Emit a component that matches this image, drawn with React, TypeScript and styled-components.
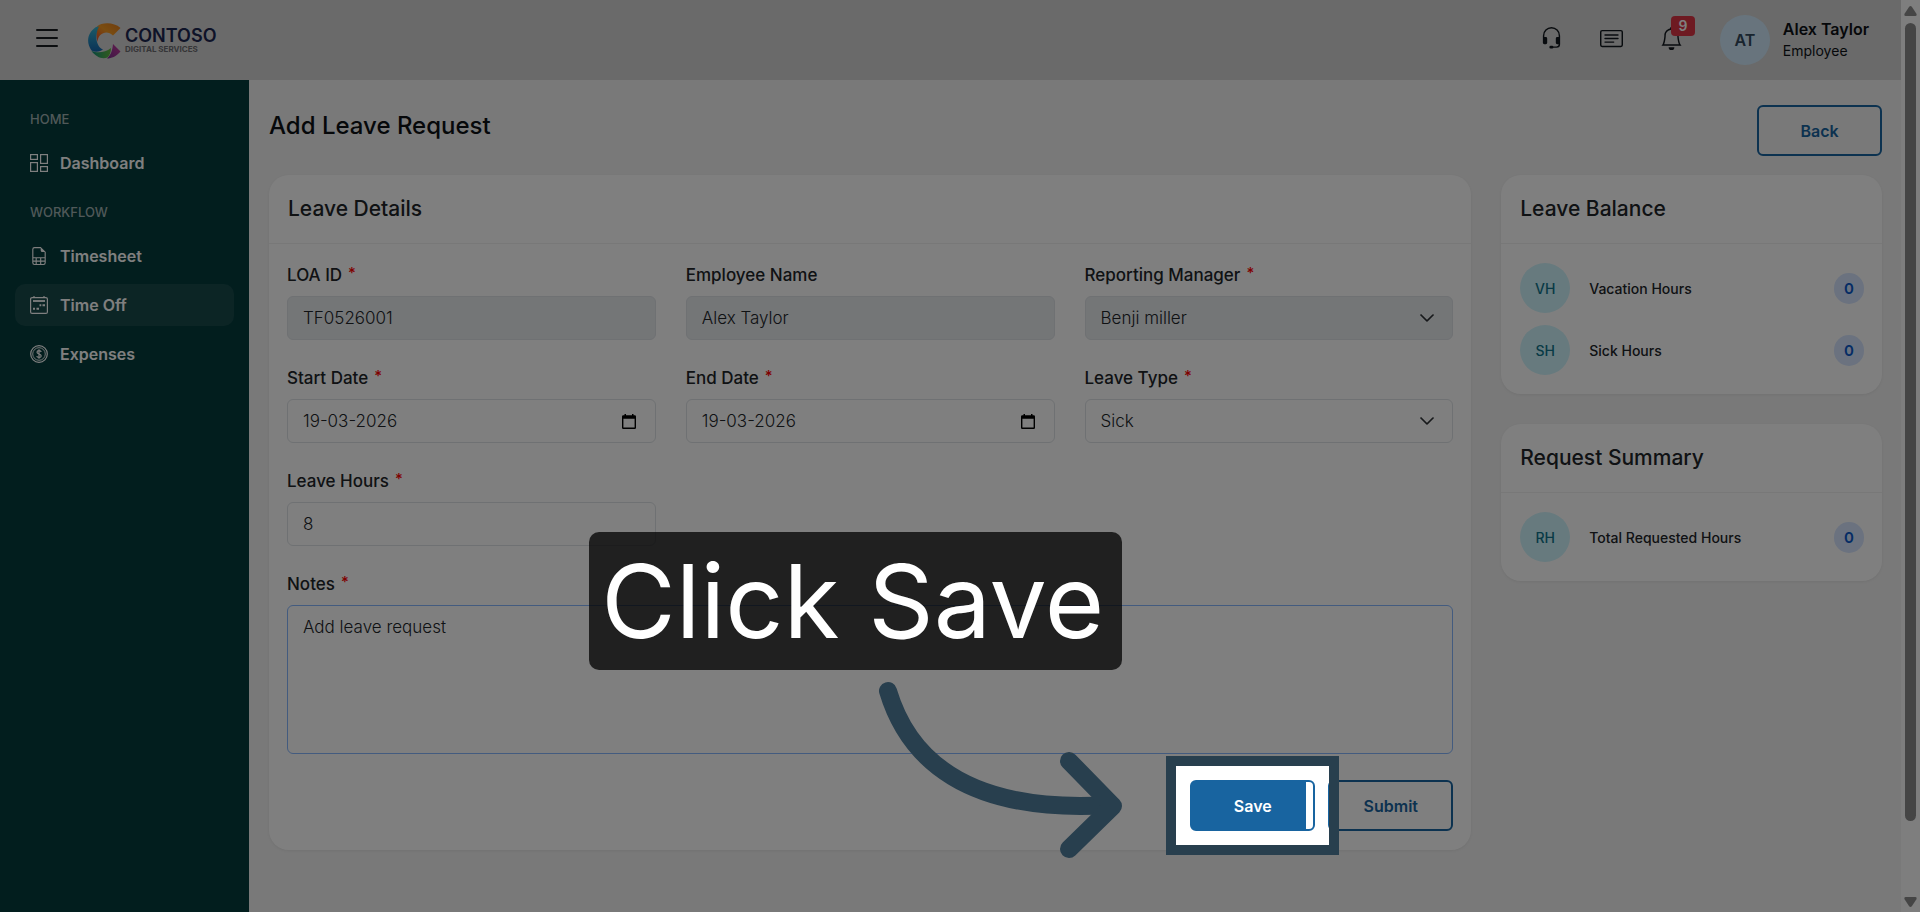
import React from 'react';
import styled, { createGlobalStyle } from 'styled-components';
import { BsBell, BsCardText, BsChevronDown, BsFileEarmarkSpreadsheet, BsHeadset } from 'react-icons/bs';

const color = {
  ink: '#212529',
  heading: '#0c1014',
  page: '#f2f2f2',
  header: '#d4d4d4',
  sidebar: '#043c3c',
  sidebarActive: '#184a4b',
  primary: '#1864a0',
  border: '#dee2e6',
  disabled: '#e9ecef',
  tour: '#283f4e',
};

const GlobalStyle = createGlobalStyle`
  *, *::before, *::after { box-sizing: border-box; }
  body {
    margin: 0;
    background: ${color.page};
    color: ${color.ink};
    font-family: Inter, 'Liberation Sans', sans-serif;
    font-size: 16px;
  }
  h1, h2, p, ul { margin: 0; padding: 0; }
  ul { list-style: none; }
  button, input, select, textarea { font-family: inherit; }
`;

const Shell = styled.div`
  display: flex;
  min-height: 100vh;
`;

const Page = styled.div`
  flex: 1;
  min-width: 0;
  display: flex;
  flex-direction: column;
`;

/* Header */

const Header = styled.header`
  display: flex;
  align-items: center;
  height: 80px;
  padding: 0 32px 0 36px;
  background: ${color.header};
`;

const MenuButton = styled.button`
  display: flex;
  flex-direction: column;
  gap: 6px;
  width: 22px;
  padding: 0;
  margin-bottom: 5px;
  border: 0;
  background: none;

  span {
    height: 2px;
    border-radius: 1px;
    background: #191c20;
  }
`;

const Brand = styled.a`
  display: flex;
  align-items: center;
  gap: 4px;
  margin: 0 auto 0 30px;
  text-decoration: none;
`;

const BrandText = styled.span`
  display: flex;
  flex-direction: column;
`;

const BrandName = styled.strong`
  color: #1c2650;
  font-size: 18px;
  font-weight: 600;
  line-height: 18px;
`;

const BrandTagline = styled.span`
  color: #6c6c70;
  font-size: 8px;
  font-weight: 700;
  line-height: 9px;
`;

const HeaderActions = styled.div`
  display: flex;
  gap: 37px;
  margin-right: 37px;
`;

const IconButton = styled.button`
  position: relative;
  display: flex;
  padding: 0 0 4px;
  border: 0;
  background: none;
  color: #10161c;
  font-size: 23px;
`;

const Count = styled.span`
  position: absolute;
  top: -11px;
  left: 11px;
  width: 24px;
  border-radius: 4px;
  background: #dc3545;
  color: #fff;
  font-size: 14px;
  font-weight: 600;
  line-height: 20px;
  text-align: center;
`;

const Avatar = styled.span<{ $user?: boolean }>`
  display: flex;
  align-items: center;
  justify-content: center;
  flex: none;
  width: 50px;
  height: 50px;
  border-radius: 50%;
  background: ${(p) => (p.$user ? '#d0e9fa' : '#cff4fc')};
  color: ${(p) => (p.$user ? '#32485c' : '#10748c')};
  font-size: ${(p) => (p.$user ? 16 : 14)}px;
  font-weight: ${(p) => (p.$user ? 600 : 500)};
`;

const Account = styled.div`
  display: flex;
  align-items: center;
  gap: 13px;
`;

const AccountName = styled.p`
  color: ${color.heading};
  font-size: 16px;
  font-weight: 600;
  line-height: 22px;
`;

const AccountRole = styled.p`
  color: ${color.heading};
  font-size: 14px;
  line-height: 22px;
`;

/* Sidebar */

const Body = styled.div`
  flex: 1;
  display: flex;
`;

const Sidebar = styled.nav`
  flex: none;
  width: 249px;
  padding: 29px 15px;
  background: ${color.sidebar};
`;

const NavHeading = styled.p`
  padding-left: 15px;
  margin-bottom: 13px;
  color: #a0b2b2;
  font-size: 13px;
  font-weight: 500;
  line-height: 20px;
`;

const NavList = styled.ul`
  display: flex;
  flex-direction: column;
  gap: 7px;
  margin-bottom: 18px;
`;

const NavLink = styled.a<{ $active?: boolean }>`
  display: flex;
  align-items: center;
  gap: 12px;
  height: 42px;
  padding: 0 15px;
  border-radius: 10px;
  background: ${(p) => (p.$active ? color.sidebarActive : 'transparent')};
  color: #fff;
  font-size: 16px;
  font-weight: 600;
  text-decoration: none;

  svg { flex: none; }
`;

/* Main content */

const Main = styled.main`
  flex: 1;
  min-width: 0;
  padding: 25px 19px 25px 20px;
`;

const TitleRow = styled.div`
  display: flex;
  justify-content: space-between;
  margin-bottom: 19px;
`;

const Title = styled.h1`
  color: ${color.heading};
  font-size: 24px;
  font-weight: 500;
  line-height: 41px;
`;

const Button = styled.button<{ $loading?: boolean }>`
  width: 125px;
  height: 51px;
  border: 2px solid ${color.primary};
  border-radius: 6px;
  background: ${(p) =>
    p.$loading ? `linear-gradient(90deg, ${color.primary} 114px, #fff 114px)` : 'transparent'};
  color: ${(p) => (p.$loading ? '#fff' : color.primary)};
  font-size: 16px;
  font-weight: 600;
`;

const Columns = styled.div`
  display: grid;
  grid-template-columns: repeat(12, minmax(0, 1fr));
  align-items: start;
  gap: 30px;
`;

const Aside = styled.aside`
  grid-column: span 3;
  display: flex;
  flex-direction: column;
  gap: 30px;
`;

const Card = styled.section`
  border-radius: 20px;
  background: #fff;
  box-shadow: 0 1px 3px rgba(0, 0, 0, 0.06);
`;

const FormCard = styled(Card)`
  grid-column: span 9;
`;

const CardTitle = styled.h2`
  padding: 0 19px;
  border-bottom: 1px solid #f0f0f0;
  font-size: 21px;
  font-weight: 500;
  line-height: 68px;
`;

const Form = styled.form`
  display: grid;
  grid-template-columns: repeat(3, minmax(0, 1fr));
  gap: 26px 30px;
  padding: 19px 18px;
`;

const Field = styled.div<{ $wide?: boolean }>`
  display: flex;
  flex-direction: column;
  gap: 9px;
  grid-column: ${(p) => (p.$wide ? '1 / -1' : 'auto')};
`;

const Label = styled.label`
  font-size: 17px;
  font-weight: 500;
  line-height: 24px;
`;

const Required = styled.span`
  margin-left: 6px;
  color: #f00;
  font-size: 15px;
  line-height: 0;
  vertical-align: 3px;
`;

const controlStyle = `
  display: block;
  width: 100%;
  height: 44px;
  padding: 0 15px;
  border: 1px solid ${color.border};
  border-radius: 6px;
  outline: 0;
  background: #fff;
  color: ${color.ink};
  font-size: 17px;
  font-weight: 300;
  opacity: 1;

  &:disabled { background: ${color.disabled}; }
`;

const Input = styled.input`${controlStyle}`;

const Select = styled.select`
  ${controlStyle}
  appearance: none;
`;

const NotesBox = styled.textarea`
  ${controlStyle}
  height: 149px;
  padding: 9px 15px;
  border-color: #86b7fe;
  line-height: 24px;
  resize: none;
`;

const ControlWrap = styled.div`
  position: relative;
`;

const ControlIcon = styled.span`
  position: absolute;
  top: 0;
  right: 18px;
  height: 44px;
  display: flex;
  align-items: center;
  pointer-events: none;

  svg {
    stroke: currentColor;
    stroke-width: 0.7;
  }
`;

const PickerButton = styled.button`
  position: absolute;
  top: 0;
  right: 12px;
  height: 44px;
  padding: 0 8px;
  display: flex;
  align-items: center;
  border: 0;
  background: none;
  color: #000;
`;

const FormActions = styled.div`
  grid-column: 1 / -1;
  display: flex;
  justify-content: flex-end;
  gap: 13px;
`;

/* Side cards */

const BalanceList = styled.ul`
  display: flex;
  flex-direction: column;
  gap: 12px;
  padding: 19px 18px 19px 19px;
`;

const BalanceRow = styled.li`
  display: flex;
  align-items: center;
  gap: 19px;
  font-size: 14px;
  font-weight: 500;
`;

const BalanceValue = styled.span`
  width: 30px;
  margin-left: auto;
  border-radius: 15px;
  background: #d6e5ff;
  color: #0a58ca;
  font-size: 15px;
  font-weight: 600;
  line-height: 31px;
  text-align: center;
`;

/* Guided tour layer, anchored to the button it explains */

const TourAnchor = styled.div`
  position: relative;
`;

const Spotlight = styled.div`
  position: absolute;
  inset: -24px;
  z-index: 10;
  border: 10px solid ${color.tour};
  box-shadow: 0 0 0 3000px rgba(0, 0, 0, 0.5);
  pointer-events: none;
`;

const Callout = styled.div`
  position: absolute;
  right: calc(100% + 68px);
  bottom: calc(100% + 110px);
  z-index: 11;
  padding: 0 18px 0 12px;
  border-radius: 10px;
  background: rgba(0, 0, 0, 0.75);
  color: #fff;
  font-size: 102px;
  line-height: 138px;
  white-space: nowrap;
`;

const TourArrow = styled.svg`
  position: absolute;
  top: -102px;
  right: calc(100% + 64px);
  z-index: 11;
  width: 250px;
  height: 184px;
`;

/* Scrollbar */

const Scrollbar = styled.div`
  position: sticky;
  top: 0;
  flex: none;
  display: flex;
  flex-direction: column;
  align-items: center;
  gap: 7px;
  width: 19px;
  height: 100vh;
  padding: 6px 0 5px;
  background: #fcfcfc;
  color: #8b8b8b;
`;

const ScrollTrack = styled.div`
  flex: 1;
`;

const ScrollThumb = styled.div`
  width: 11px;
  height: 92%;
  border-radius: 6px;
  background: currentColor;
`;

const Logo = () => (
  <svg width="33" height="37" viewBox="0 0 33 37" aria-hidden="true">
    <defs>
      <linearGradient id="warm" x1="0" y1="1" x2="1" y2="0">
        <stop offset="0" stopColor="#e8482a" />
        <stop offset="0.5" stopColor="#f59a22" />
        <stop offset="1" stopColor="#e07a1c" />
      </linearGradient>
      <linearGradient id="cool" x1="0" y1="0" x2="0" y2="1">
        <stop offset="0" stopColor="#38b5ce" />
        <stop offset="1" stopColor="#1466ae" />
      </linearGradient>
      <linearGradient id="leaf" x1="0" y1="0" x2="1" y2="0">
        <stop offset="0" stopColor="#128f7c" />
        <stop offset="1" stopColor="#66b83c" />
      </linearGradient>
      <linearGradient id="berry" x1="1" y1="0" x2="0" y2="1">
        <stop offset="0" stopColor="#c63a9a" />
        <stop offset="1" stopColor="#7c2f90" />
      </linearGradient>
    </defs>
    <path d="M9 4.500C14 0 26 0 32.500 6L25 13.500C19 7.500 10 11 9.500 20C8 15 8 9 9 4.500Z" fill="url(#warm)" />
    <path d="M8 5C-1 11 -2 21 3.500 28.500C8 31 13 29 15 27.500C8.500 25 6 14 11 4.500Z" fill="url(#cool)" />
    <path d="M3.500 29C8 35 14 37.500 19.500 35.500C22 33 23 30 23 26C17 31 9 31 3.500 29Z" fill="url(#leaf)" />
    <path d="M25 22L32.500 29.500C28 34.500 23.500 36.500 19 36.500C23 33 24.500 28 25 22Z" fill="url(#berry)" />
  </svg>
);

const DashboardIcon = () => (
  <svg width="18" height="18" viewBox="0 0 18 18" fill="none" stroke="currentColor" strokeWidth="1.2" aria-hidden="true">
    <rect x="0.600" y="0.600" width="6.800" height="4.800" />
    <rect x="0.600" y="8.600" width="6.800" height="8.800" />
    <rect x="10.600" y="0.600" width="6.800" height="8.800" />
    <rect x="10.600" y="12.600" width="6.800" height="4.800" />
  </svg>
);

const TimeOffIcon = () => (
  <svg width="18" height="18" viewBox="0 0 18 18" fill="none" stroke="currentColor" strokeWidth="1.2" aria-hidden="true">
    <rect x="0.600" y="1.600" width="16.800" height="15.800" rx="1.500" />
    <path d="M4 0v2M14 0v2" />
    <path d="M3 5h12" strokeWidth="1.800" />
    <path d="M9.500 9.200h1.800M12.500 9.200h2.500M3 12.800h2M6.500 12.800h2.500" strokeWidth="2" />
  </svg>
);

const ExpensesIcon = () => (
  <svg width="18" height="18" viewBox="0 0 18 18" fill="none" stroke="currentColor" strokeWidth="1.2" aria-hidden="true">
    <circle cx="9" cy="9" r="8.300" />
    <circle cx="9" cy="9" r="6.300" strokeWidth="0.900" />
    <path d="M11.200 7C10.800 5.200 7 5.300 7 7.200C7 9.300 11.200 8.600 11.200 10.900C11.200 12.800 7.100 12.900 6.800 11M9 4.300v9.400" />
  </svg>
);

const CalendarIcon = () => (
  <svg width="14" height="15" viewBox="0 0 14 15" aria-hidden="true">
    <path
      fill="currentColor"
      d="M2.500 0H4V1.300H10V0H11.500V1.300H12.700Q14 1.300 14 2.600V13.700Q14 15 12.700 15H1.300Q0 15 0 13.700V2.600Q0 1.300 1.300 1.300H2.500ZM1.400 4.800V13.600H12.600V4.800Z"
    />
  </svg>
);

type FieldProps = { id: string; label: string; required?: boolean; wide?: boolean; children: React.ReactNode };

const LabeledField = ({ id, label, required, wide, children }: FieldProps) => (
  <Field $wide={wide}>
    <Label htmlFor={id}>
      {label}
      {required && <Required>*</Required>}
    </Label>
    {children}
  </Field>
);

const DateInput = ({ id, value }: { id: string; value: string }) => (
  <ControlWrap>
    <Input id={id} defaultValue={value} />
    <PickerButton type="button" aria-label="Open calendar">
      <CalendarIcon />
    </PickerButton>
  </ControlWrap>
);

const SelectInput = ({ id, value, disabled }: { id: string; value: string; disabled?: boolean }) => (
  <ControlWrap>
    <Select id={id} disabled={disabled} defaultValue={value}>
      <option>{value}</option>
    </Select>
    <ControlIcon>
      <BsChevronDown />
    </ControlIcon>
  </ControlWrap>
);

const SummaryCard = ({ title, rows }: { title: string; rows: [string, string, number][] }) => (
  <Card>
    <CardTitle>{title}</CardTitle>
    <BalanceList>
      {rows.map(([initials, name, hours]) => (
        <BalanceRow key={initials}>
          <Avatar>{initials}</Avatar>
          {name}
          <BalanceValue>{hours}</BalanceValue>
        </BalanceRow>
      ))}
    </BalanceList>
  </Card>
);

export default function App() {
  return (
    <>
      <GlobalStyle />
      <Shell>
        <Page>
          <Header>
            <MenuButton aria-label="Toggle menu">
              <span />
              <span />
              <span />
            </MenuButton>
            <Brand href="#">
              <Logo />
              <BrandText>
                <BrandName>CONTOSO</BrandName>
                <BrandTagline>DIGITAL SERVICES</BrandTagline>
              </BrandText>
            </Brand>
            <HeaderActions>
              <IconButton aria-label="Support">
                <BsHeadset />
              </IconButton>
              <IconButton aria-label="News">
                <BsCardText />
              </IconButton>
              <IconButton aria-label="Notifications">
                <BsBell />
                <Count>9</Count>
              </IconButton>
            </HeaderActions>
            <Account>
              <Avatar $user>AT</Avatar>
              <div>
                <AccountName>Alex Taylor</AccountName>
                <AccountRole>Employee</AccountRole>
              </div>
            </Account>
          </Header>

          <Body>
            <Sidebar>
              <NavHeading>HOME</NavHeading>
              <NavList>
                <li>
                  <NavLink href="#">
                    <DashboardIcon />
                    Dashboard
                  </NavLink>
                </li>
              </NavList>
              <NavHeading>WORKFLOW</NavHeading>
              <NavList>
                <li>
                  <NavLink href="#">
                    <BsFileEarmarkSpreadsheet size={18} />
                    Timesheet
                  </NavLink>
                </li>
                <li>
                  <NavLink href="#" $active>
                    <TimeOffIcon />
                    Time Off
                  </NavLink>
                </li>
                <li>
                  <NavLink href="#">
                    <ExpensesIcon />
                    Expenses
                  </NavLink>
                </li>
              </NavList>
            </Sidebar>

            <Main>
              <TitleRow>
                <Title>Add Leave Request</Title>
                <Button type="button">Back</Button>
              </TitleRow>
              <Columns>
                <FormCard>
                  <CardTitle>Leave Details</CardTitle>
                  <Form>
                    <LabeledField id="loa" label="LOA ID" required>
                      <Input id="loa" defaultValue="TF0526001" disabled />
                    </LabeledField>
                    <LabeledField id="employee" label="Employee Name">
                      <Input id="employee" defaultValue="Alex Taylor" disabled />
                    </LabeledField>
                    <LabeledField id="manager" label="Reporting Manager" required>
                      <SelectInput id="manager" value="Benji miller" disabled />
                    </LabeledField>
                    <LabeledField id="start" label="Start Date" required>
                      <DateInput id="start" value="19-03-2026" />
                    </LabeledField>
                    <LabeledField id="end" label="End Date" required>
                      <DateInput id="end" value="19-03-2026" />
                    </LabeledField>
                    <LabeledField id="type" label="Leave Type" required>
                      <SelectInput id="type" value="Sick" />
                    </LabeledField>
                    <LabeledField id="hours" label="Leave Hours" required>
                      <Input id="hours" defaultValue="8" />
                    </LabeledField>
                    <LabeledField id="notes" label="Notes" required wide>
                      <NotesBox id="notes" defaultValue="Add leave request" />
                    </LabeledField>
                    <FormActions>
                      <TourAnchor>
                        <Button type="button" $loading>
                          Save
                        </Button>
                        <Spotlight />
                        <Callout>Click Save</Callout>
                        <TourArrow
                          viewBox="876 678 250 184"
                          fill="none"
                          stroke={color.tour}
                          strokeWidth="18"
                          strokeLinecap="round"
                          strokeLinejoin="round"
                          aria-hidden="true"
                        >
                          <path d="M888 691C908 758 966 814 1110 805" />
                          <path d="M1069 761L1113 806L1069 849" />
                        </TourArrow>
                      </TourAnchor>
                      <Button type="button">Submit</Button>
                    </FormActions>
                  </Form>
                </FormCard>
                <Aside>
                  <SummaryCard
                    title="Leave Balance"
                    rows={[
                      ['VH', 'Vacation Hours', 0],
                      ['SH', 'Sick Hours', 0],
                    ]}
                  />
                  <SummaryCard title="Request Summary" rows={[['RH', 'Total Requested Hours', 0]]} />
                </Aside>
              </Columns>
            </Main>
          </Body>
        </Page>
        <Scrollbar aria-hidden="true">
          <svg width="13" height="10" viewBox="0 0 13 10" fill="currentColor">
            <path d="M6.500 0Q7.300 0 8 1L12.600 8Q13 10 11.500 10H1.500Q0 10 0.400 8L5 1Q5.700 0 6.500 0Z" />
          </svg>
          <ScrollTrack>
            <ScrollThumb />
          </ScrollTrack>
          <svg width="13" height="10" viewBox="0 0 13 10" fill="currentColor">
            <path d="M6.500 10Q7.300 10 8 9L12.600 2Q13 0 11.500 0H1.500Q0 0 0.400 2L5 9Q5.700 10 6.500 10Z" />
          </svg>
        </Scrollbar>
      </Shell>
    </>
  );
}
